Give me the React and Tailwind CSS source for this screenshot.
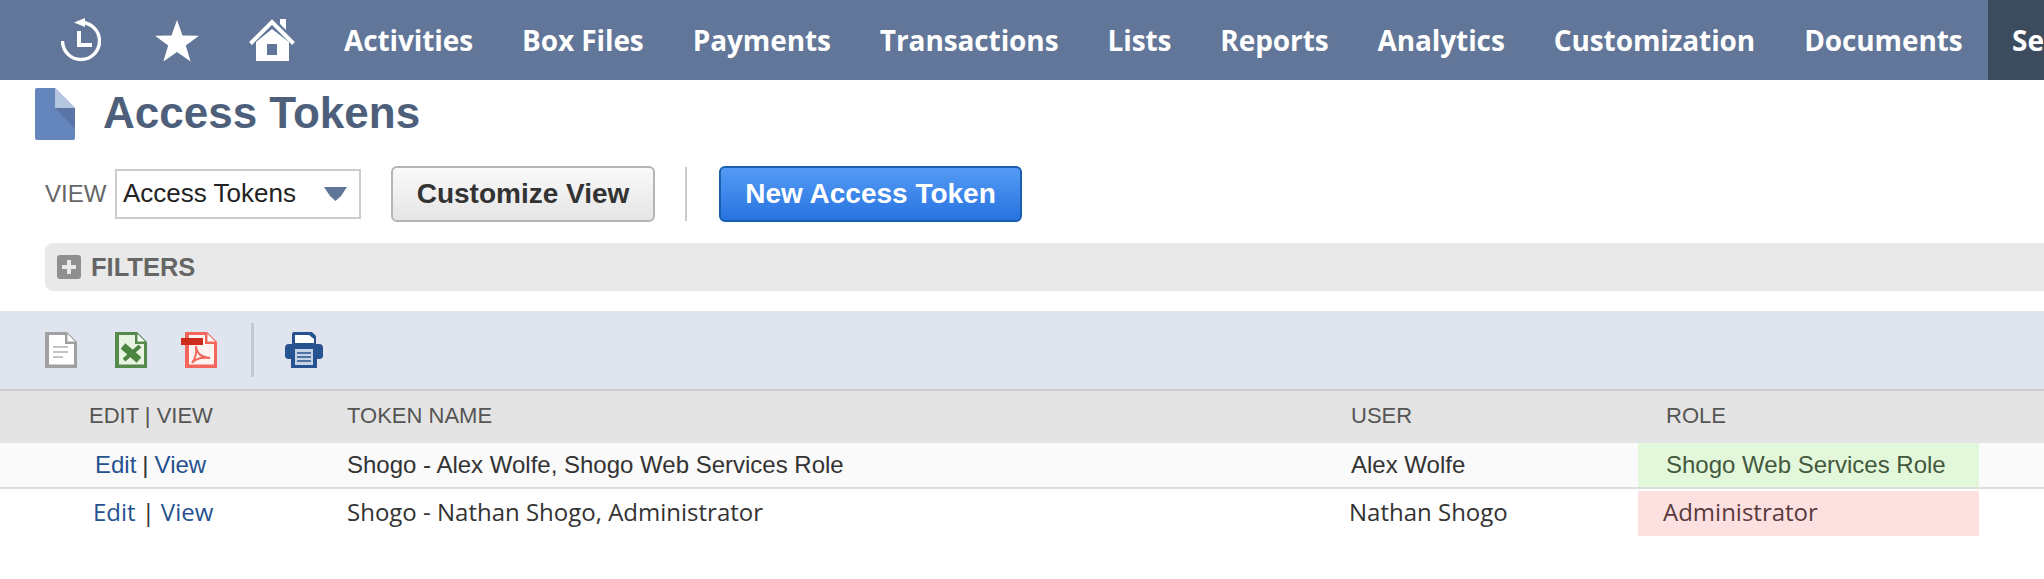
import React from "react";

const navItems = ["Activities", "Box Files", "Payments", "Transactions", "Lists", "Reports", "Analytics", "Customization", "Documents"];

const HistoryIcon = () => (
  <svg width="40" height="44" viewBox="0 0 40 44" fill="none" className="shrink-0">
    <path d="M20 4.5 A18.5 18.5 0 1 1 1.5 23" stroke="white" strokeWidth="3.4" />
    <path d="M13 4.5 L24 0 V9 Z" fill="white" />
    <path d="M18 13 V27 H31" stroke="white" strokeWidth="4" />
  </svg>
);

const StarIcon = () => (
  <svg width="44" height="42" viewBox="0 0 44 42" className="shrink-0">
    <path d="M22 0 L27.5 15.5 L44 15.8 L30.8 25.6 L35.6 41.5 L22 32 L8.4 41.5 L13.2 25.6 L0 15.8 L16.5 15.5 Z" fill="white" />
  </svg>
);

const HomeIcon = () => (
  <svg width="46" height="42" viewBox="0 0 46 42" className="shrink-0">
    <path d="M1.5 24.5 L23 3 L44.5 24.5" fill="none" stroke="white" strokeWidth="4" />
    <path d="M31 0 H37 V11 L31 5 Z" fill="white" />
    <path fillRule="evenodd" d="M7 42 V23 L23 10 L40 23 V42 Z M18 25 V36 H28 V25 Z" fill="white" />
  </svg>
);

const PageIcon = () => (
  <svg width="40" height="52" viewBox="0 0 40 52" className="shrink-0">
    <path d="M2 0 H20 L40 20 V50 Q40 52 38 52 H2 Q0 52 0 50 V2 Q0 0 2 0 Z" fill="#6486bc" />
    <path d="M20 20 L40 41 V20 Z" fill="#5a75a5" />
    <path d="M20 0 L40 20 H20 Z" fill="#b4c5e0" />
  </svg>
);

// page shape shared by the export icons
const FileIcon = ({ color, fill = "white", children, width = 32, viewBox = "0 0 32 36" }) => (
  <svg width={width} height="36" viewBox={viewBox} className="shrink-0">
    <path d="M0 0 H22 L32 10 V36 H0 Z" fill={color} />
    <path d="M4 3 H20 V12 H29 V32.5 H4 Z" fill={fill} />
    <path d="M22.5 2 L30 9.5 H22.5 Z" fill="white" />
    {children}
  </svg>
);

const PrinterIcon = () => (
  <svg width="38" height="36" viewBox="0 0 38 36" className="shrink-0">
    <path d="M7 12 V2 Q7 0 9 0 H27 L31 4 V12 H34 Q38 12 38 16 V24 Q38 27 34 27 H32 V36 H6 V27 H4 Q0 27 0 24 V16 Q0 12 4 12 Z" fill="#26528f" />
    <path d="M10 3 H24 L29 7 V11 H10 Z" fill="white" />
    <path d="M10 17 H28 V33 H10 Z" fill="#c8d3e6" />
    <path d="M12 21 H26 M12 25 H26 M12 29 H26" stroke="#26528f" strokeWidth="1.5" />
  </svg>
);

const App = () => (
  <div className="w-[2044px] h-[579px] overflow-hidden bg-white font-['Liberation_Sans',sans-serif]">
    {/* Top nav */}
    <div className="flex items-center h-[80px] bg-[#617698] pl-[61px] overflow-hidden">
      <div className="flex items-center mr-[49px]">
        <HistoryIcon />
        <div className="ml-[54px] mr-[50px] mt-[1px]">
          <StarIcon />
        </div>
        <HomeIcon />
      </div>
      <div className="flex items-center gap-[49px] font-['Open_Sans',sans-serif] font-bold text-[28px] tracking-[-0.1px] text-white whitespace-nowrap flex-1">
        {navItems.map((item) => (
          <span key={item}>{item}</span>
        ))}
      </div>
      <div className="w-[56px] h-full shrink-0 bg-[#3d4b5f] pl-[24px] flex items-center font-['Open_Sans',sans-serif] font-bold text-[28px] text-white">
        Se
      </div>
    </div>

    {/* Title */}
    <div className="flex items-start pl-[35px] pt-[8px] h-[86px]">
      <PageIcon />
      <h1 className="ml-[28px] text-[44px] leading-[50px] font-bold text-[#4d5f7b]">Access Tokens</h1>
    </div>

    {/* View controls */}
    <div className="flex items-center pl-[45px] h-[56px]">
      <span className="text-[24px] text-[#666] w-[70px]">VIEW</span>
      <div className="flex items-center justify-between w-[246px] h-[50px] border-2 border-[#ccc] pl-[6px] pr-[12px] pb-[1px] text-[26px] text-[#222]">
        <span>Access Tokens</span>
        <svg width="23" height="15" viewBox="0 0 23 15">
          <path d="M0 1 H23 L17 10 L11.5 15 L6 10 Z" fill="#5f7699" />
        </svg>
      </div>
      <button className="ml-[30px] w-[264px] h-[56px] rounded-[6px] border-2 border-[#b5b5b5] bg-gradient-to-b from-[#fafafa] to-[#e5e5e5] text-[28px] font-bold text-[#333]">
        Customize View
      </button>
      <div className="ml-[30px] w-[2px] h-[54px] bg-[#ccc]" />
      <button className="ml-[32px] w-[303px] h-[56px] rounded-[6px] border-2 border-[#1a5fb0] bg-gradient-to-b from-[#559bf5] to-[#2673e0] text-[28px] font-bold text-white">
        New Access Token
      </button>
    </div>

    {/* Filters */}
    <div className="flex items-center ml-[45px] mt-[21px] h-[48px] rounded-l-[8px] bg-[#e9e9e9] pl-[12px]">
      <div className="relative w-[24px] h-[24px] rounded-[3px] bg-[#8f8f8f]">
        <div className="absolute left-[5px] top-[10px] w-[14px] h-[4px] bg-[#e9e9e9]" />
        <div className="absolute left-[10px] top-[5px] w-[4px] h-[14px] bg-[#e9e9e9]" />
      </div>
      <span className="ml-[10px] text-[25.5px] font-bold text-[#666]">FILTERS</span>
    </div>

    {/* Toolbar */}
    <div className="flex items-center mt-[20px] h-[80px] border-b-2 border-[#ccc] bg-[#e0e4ee] pl-[45px]">
      <FileIcon color="#a0a0a0">
        <path d="M8 15 H23 M8 20 H23 M8 25 H18" stroke="#c4c4c4" strokeWidth="2.2" />
      </FileIcon>
      <div className="ml-[38px]">
        <FileIcon color="#56894c" fill="#e9f3e2">
          <path d="M8 14 L24 28" stroke="#4b8540" strokeWidth="7" />
          <path d="M25 14 L9 28" stroke="#4b8540" strokeWidth="4" />
        </FileIcon>
      </div>
      <div className="ml-[34px]">
        <FileIcon color="#f4655b" fill="#fdf3f1" width={36} viewBox="-4 0 36 36">
          <path d="M-4 6 H18 V13 H-4 Z" fill="#cc2b1d" />
          <path d="M11 14 C12 22 16 25 25 26 C17 25 10 27 7 31 C10 27 12 21 11 14 Z" fill="none" stroke="#f4655b" strokeWidth="2" />
        </FileIcon>
      </div>
      <div className="ml-[34px] w-[3px] h-[54px] bg-[#c4c8cf]" />
      <div className="ml-[31px]">
        <PrinterIcon />
      </div>
    </div>

    {/* Table */}
    <div className="flex items-center h-[52px] pb-[4px] bg-[#e4e4e4] text-[22px] text-[#555]">
      <div className="w-[347px] pl-[89px]">EDIT | VIEW</div>
      <div className="w-[1004px]">TOKEN NAME</div>
      <div className="w-[315px]">USER</div>
      <div>ROLE</div>
    </div>
    <div className="flex items-stretch h-[46px] bg-[#fafafa] border-b-2 border-[#ddd] text-[24px] text-[#333]">
      <div className="flex items-center w-[347px] pl-[95px]">
        <a className="text-[#26528f]">Edit</a>
        <span className="mx-[6px]">|</span>
        <a className="text-[#26528f]">View</a>
      </div>
      <div className="flex items-center w-[1004px]">Shogo - Alex Wolfe, Shogo Web Services Role</div>
      <div className="flex items-center w-[287px]">Alex Wolfe</div>
      <div className="flex items-center w-[341px] pl-[28px] bg-[#e3f8da] text-[#44583e]">Shogo Web Services Role</div>
    </div>
    <div className="flex items-stretch h-[47px] text-[24px] text-[#333] font-['Open_Sans',sans-serif]">
      <div className="flex items-center w-[347px] pl-[93px] pb-[2px]">
        <a className="text-[#26528f]">Edit</a>
        <span className="mx-[6px]">|</span>
        <a className="text-[#26528f]">View</a>
      </div>
      <div className="flex items-center w-[1002px] pb-[2px]">Shogo - Nathan Shogo, Administrator</div>
      <div className="flex items-center w-[289px] pb-[2px]">Nathan Shogo</div>
      <div className="flex items-center w-[341px] mt-[2px] pl-[25px] pb-[4px] bg-[#fde0e0] text-[#5a3a3e]">Administrator</div>
    </div>
  </div>
);

export default App;
